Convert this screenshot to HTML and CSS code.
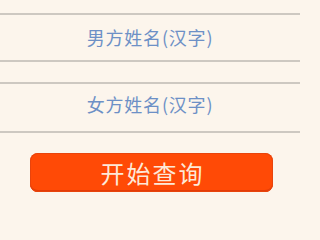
FILE: index.html
```html
<!DOCTYPE html>
<html lang="zh">
<head>
<meta charset="utf-8">
<link rel="stylesheet" href="styles.css">
</head>
<body>
<div class="form">
  <div class="field field-top">男方姓名(汉字)</div>
  <div class="field field-bottom">女方姓名(汉字)</div>
  <div class="submit">开始查询</div>
</div>
</body>
</html>
```
FILE: styles.css
```css
html, body {
  margin: 0;
  padding: 0;
  background: #fcf5ec;
}
.form {
  width: 300px;
  height: 200px;
  padding-top: 13px;
  box-sizing: border-box;
  display: flex;
  flex-direction: column;
  font-family: "Noto Sans CJK SC", "Noto Sans", sans-serif;
}
.field {
  border-top: 2px solid #cdc8c1;
  border-bottom: 2px solid #cdc8c1;
  display: flex;
  align-items: center;
  justify-content: center;
  color: #6d90c6;
  font-size: 18px;
  letter-spacing: 0.8px;
  box-sizing: border-box;
}
.field-top {
  height: 49px;
  padding-bottom: 2px;
}
.field-bottom {
  height: 51px;
  margin-top: 20px;
  padding-bottom: 8px;
}
.submit {
  margin: 20px 27px 0 30px;
  height: 39px;
  border-radius: 8px;
  background: #ff4a06;
  box-shadow: inset 0 0 0 1px #e8440c, inset 0 -2px 0 #e23c08;
  color: #fde9d8;
  font-size: 24px;
  letter-spacing: 2px;
  display: flex;
  align-items: center;
  justify-content: center;
  padding-left: 2px;
}
```
